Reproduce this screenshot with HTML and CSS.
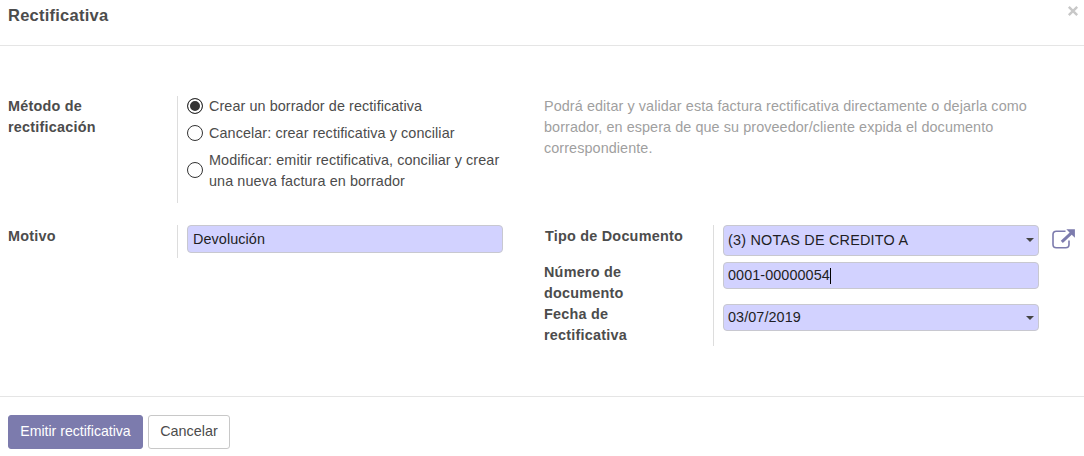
FILE: index.html
```html
<!DOCTYPE html>
<html lang="es">
<head>
<meta charset="utf-8">
<title>Rectificativa</title>
<link rel="stylesheet" href="styles.css">
</head>
<body>
<div class="modal">
  <header class="modal-header">
    <h4 class="title">Rectificativa</h4>
    <svg class="close" viewBox="0 0 12 12" role="img" aria-label="Cerrar"><path d="M1.8 1.8L10.2 10.2M10.2 1.8L1.8 10.2"/></svg>
  </header>
  <main class="modal-body">
    <section class="row row-method">
      <div class="group">
        <div class="label">Método de<br>rectificación</div>
        <div class="cell radios">
          <label class="option"><span class="radio checked"></span><span>Crear un borrador de rectificativa</span></label>
          <label class="option"><span class="radio"></span><span>Cancelar: crear rectificativa y conciliar</span></label>
          <label class="option"><span class="radio"></span><span>Modificar: emitir rectificativa, conciliar y crear<br>una nueva factura en borrador</span></label>
        </div>
      </div>
      <p class="help">Podrá editar y validar esta factura rectificativa directamente o dejarla como<br>borrador, en espera de que su proveedor/cliente expida el documento<br>correspondiente.</p>
    </section>
    <section class="row">
      <div class="group group-reason">
        <div class="label">Motivo</div>
        <div class="cell"><div class="field field-reason">Devolución</div></div>
      </div>
      <div class="group group-document">
        <div class="labels">
          <div class="label label-type">Tipo de Documento</div>
          <div class="label">Número de<br>documento</div>
          <div class="label">Fecha de<br>rectificativa</div>
        </div>
        <div class="cell fields">
          <div class="field field-type"><span>(3) NOTAS DE CREDITO A</span><span class="caret"></span></div>
          <div class="field field-number"><span>0001-00000054</span><span class="cursor"></span></div>
          <div class="field field-date"><span>03/07/2019</span><span class="caret"></span></div>
        </div>
        <svg class="external" viewBox="0 0 24 20" role="img" aria-label="Enlace externo">
          <path class="frame" d="M13.5 2.2H4.3Q1 2.2 1 5.5V15.5Q1 18.8 4.3 18.8H13.7Q17 18.8 17 15.5V11.5"/>
          <path class="shaft" d="M9.8 12.8L19 4.4"/>
          <path class="head" d="M14.3 .3H22.9V8.8L20 6L17 3Z"/>
        </svg>
      </div>
    </section>
  </main>
  <footer class="modal-footer">
    <button class="btn primary">Emitir rectificativa</button>
    <button class="btn">Cancelar</button>
  </footer>
</div>
</body>
</html>
```
FILE: styles.css
```css
* { box-sizing: border-box; }
body {
  margin: 0;
  background: #fff;
  color: #4c4c4c;
  font: 14.4px/21px "Liberation Sans", Arial, sans-serif;
  letter-spacing: 0.08px;
}
.modal { height: 456px; display: flex; flex-direction: column; overflow: hidden; white-space: nowrap; }
.modal-header {
  height: 46px;
  padding: 5px 5px 0 8px;
  border-bottom: 1px solid #e5e5e5;
  display: flex;
  justify-content: space-between;
  align-items: flex-start;
}
.title { margin: 0; font-size: 16.5px; line-height: 21px; letter-spacing: 0.24px; }
.close { width: 12px; height: 12px; fill: none; stroke: #c8c8c8; stroke-width: 2.4; }
.modal-body { height: 350px; padding: 50px 0 0 8px; }
.row { display: flex; }
.row-method { height: 129px; }
.group { display: flex; width: 536px; align-items: flex-start; }
.label { width: 169px; font-weight: bold; letter-spacing: 0.23px; }
.cell { border-left: 1px solid #ddd; padding-left: 9px; }
.radios { height: 107px; display: flex; flex-direction: column; gap: 6px; }
.option { display: flex; align-items: center; gap: 6px; }
.radio {
  width: 16px;
  height: 16px;
  margin-bottom: 2px;
  border: 1px solid #333;
  border-radius: 50%;
  flex: none;
}
.radio.checked { background: #333; box-shadow: inset 0 0 0 2px #fff; }
.help { margin: 0; color: #9f9f9f; }
.group-reason .cell { height: 33px; }
.group-reason .label { padding-top: 1px; }
.group-document { width: auto; }
.labels { width: 169px; }
.label-type { padding: 1px 0 0 1px; height: 37px; }
.fields { height: 121px; }
.field {
  width: 316px;
  border: 1px solid #c8c8d0;
  border-radius: 4px;
  background: #d2d2ff;
  color: #1e1e24;
  padding: 0 4px;
  display: flex;
  align-items: center;
}
.field-reason { height: 28px; padding-left: 5px; }
.field-type { height: 31px; letter-spacing: 0.22px; }
.field-number { height: 27px; margin: 6px 0 15px; }
.field-date { height: 27px; }
.caret {
  margin-left: auto;
  border: 4px solid transparent;
  border-top-color: #444;
  border-bottom: 0;
}
.field-type .caret { margin-bottom: 2px; }
.cursor { width: 1px; height: 16px; background: #000; }
.external { width: 24px; height: 20px; margin: 4px 0 0 13px; }
.frame { fill: none; stroke: #7c7bad; stroke-width: 1.6; }
.shaft { stroke: #7c7bad; stroke-width: 3; }
.head { fill: #7c7bad; }
.modal-footer {
  height: 60px;
  border-top: 1px solid #e5e5e5;
  padding: 18px 8px 0;
  display: flex;
  align-items: flex-start;
  gap: 5px;
}
.btn {
  width: 82px;
  height: 34px;
  padding: 0 0 2px;
  border: 1px solid #c8c8c8;
  border-radius: 3px;
  background: #fff;
  color: #4c4c4c;
  font: inherit;
}
.btn.primary { width: 135px; background: #7c7bad; border-color: #7c7bad; color: #fff; font-size: 14.1px; }
```
